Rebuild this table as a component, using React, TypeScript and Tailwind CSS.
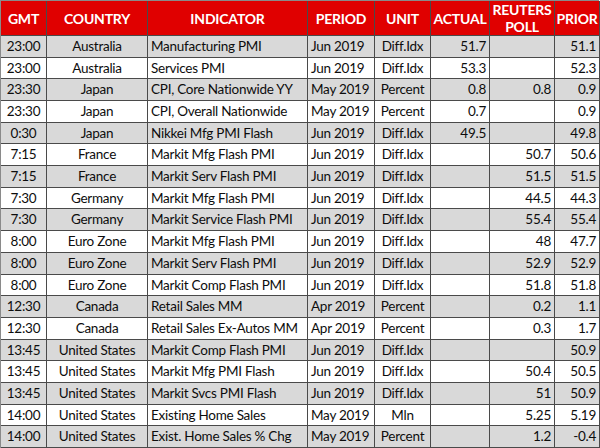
import React from 'react'

type Row = {
  gmt: string
  country: string
  indicator: string
  period: string
  unit: string
  actual: string
  poll: string
  prior: string
}

const rows: Row[] = [
  { gmt: '23:00', country: 'Australia', indicator: 'Manufacturing PMI', period: 'Jun 2019', unit: 'Diff.Idx', actual: '51.7', poll: '', prior: '51.1' },
  { gmt: '23:00', country: 'Australia', indicator: 'Services PMI', period: 'Jun 2019', unit: 'Diff.Idx', actual: '53.3', poll: '', prior: '52.3' },
  { gmt: '23:30', country: 'Japan', indicator: 'CPI, Core Nationwide YY', period: 'May 2019', unit: 'Percent', actual: '0.8', poll: '0.8', prior: '0.9' },
  { gmt: '23:30', country: 'Japan', indicator: 'CPI, Overall Nationwide', period: 'May 2019', unit: 'Percent', actual: '0.7', poll: '', prior: '0.9' },
  { gmt: '0:30', country: 'Japan', indicator: 'Nikkei Mfg PMI Flash', period: 'Jun 2019', unit: 'Diff.Idx', actual: '49.5', poll: '', prior: '49.8' },
  { gmt: '7:15', country: 'France', indicator: 'Markit Mfg Flash PMI', period: 'Jun 2019', unit: 'Diff.Idx', actual: '', poll: '50.7', prior: '50.6' },
  { gmt: '7:15', country: 'France', indicator: 'Markit Serv Flash PMI', period: 'Jun 2019', unit: 'Diff.Idx', actual: '', poll: '51.5', prior: '51.5' },
  { gmt: '7:30', country: 'Germany', indicator: 'Markit Mfg Flash PMI', period: 'Jun 2019', unit: 'Diff.Idx', actual: '', poll: '44.5', prior: '44.3' },
  { gmt: '7:30', country: 'Germany', indicator: 'Markit Service Flash PMI', period: 'Jun 2019', unit: 'Diff.Idx', actual: '', poll: '55.4', prior: '55.4' },
  { gmt: '8:00', country: 'Euro Zone', indicator: 'Markit Mfg Flash PMI', period: 'Jun 2019', unit: 'Diff.Idx', actual: '', poll: '48', prior: '47.7' },
  { gmt: '8:00', country: 'Euro Zone', indicator: 'Markit Serv Flash PMI', period: 'Jun 2019', unit: 'Diff.Idx', actual: '', poll: '52.9', prior: '52.9' },
  { gmt: '8:00', country: 'Euro Zone', indicator: 'Markit Comp Flash PMI', period: 'Jun 2019', unit: 'Diff.Idx', actual: '', poll: '51.8', prior: '51.8' },
  { gmt: '12:30', country: 'Canada', indicator: 'Retail Sales MM', period: 'Apr 2019', unit: 'Percent', actual: '', poll: '0.2', prior: '1.1' },
  { gmt: '12:30', country: 'Canada', indicator: 'Retail Sales Ex-Autos MM', period: 'Apr 2019', unit: 'Percent', actual: '', poll: '0.3', prior: '1.7' },
  { gmt: '13:45', country: 'United States', indicator: 'Markit Comp Flash PMI', period: 'Jun 2019', unit: 'Diff.Idx', actual: '', poll: '', prior: '50.9' },
  { gmt: '13:45', country: 'United States', indicator: 'Markit Mfg PMI Flash', period: 'Jun 2019', unit: 'Diff.Idx', actual: '', poll: '50.4', prior: '50.5' },
  { gmt: '13:45', country: 'United States', indicator: 'Markit Svcs PMI Flash', period: 'Jun 2019', unit: 'Diff.Idx', actual: '', poll: '51', prior: '50.9' },
  { gmt: '14:00', country: 'United States', indicator: 'Existing Home Sales', period: 'May 2019', unit: 'Mln', actual: '', poll: '5.25', prior: '5.19' },
  { gmt: '14:00', country: 'United States', indicator: 'Exist. Home Sales % Chg', period: 'May 2019', unit: 'Percent', actual: '', poll: '1.2', prior: '-0.4' },
]

// header cells
const th = 'flex items-center justify-center border-r border-b border-[#4a4a4a] bg-[#e00000] text-center font-bold text-white text-[14px] tracking-[-0.2px] leading-[17px]'
// body cells
const td = 'flex items-center border-r border-b border-[#4a4a4a] px-[3px] whitespace-nowrap overflow-hidden'

export default function App() {
  return (
    <div className="h-[448px] w-[600px] overflow-hidden bg-white font-['Lato',_'Liberation_Sans',_sans-serif] text-[13.5px] tracking-[-0.25px] text-[#0d0d0d]">
      <div className="grid w-[599px] grid-cols-[46px_101px_160px_67px_56px_59px_65px_45px] grid-rows-[35px_22px_21px_22px_22px_21px_22px_22px_21px_22px_22px_22px_21px_22px_22px_21px_22px_22px_21px_22px] border-l border-t border-[#8a8a8a]">
        <div className={th}>GMT</div>
        <div className={th}>COUNTRY</div>
        <div className={th}>INDICATOR</div>
        <div className={th}>PERIOD</div>
        <div className={th}>UNIT</div>
        <div className={th}>ACTUAL</div>
        <div className={`${th} flex-col`}>
          <span>REUTERS</span>
          <span>POLL</span>
        </div>
        <div className={th}>PRIOR</div>

        {rows.map((r, i) => {
          const bg = i % 2 === 0 ? 'bg-[#d9d9d9]' : 'bg-white'
          return (
            <React.Fragment key={i}>
              <div className={`${td} ${bg} justify-center`}>{r.gmt}</div>
              <div className={`${td} ${bg} justify-center`}>{r.country}</div>
              <div className={`${td} ${bg} justify-start`}>{r.indicator}</div>
              <div className={`${td} ${bg} justify-start`}>{r.period}</div>
              <div className={`${td} ${bg} justify-center`}>{r.unit}</div>
              <div className={`${td} ${bg} justify-end`}>{r.actual}</div>
              <div className={`${td} ${bg} justify-end`}>{r.poll}</div>
              <div className={`${td} ${bg} justify-end`}>{r.prior}</div>
            </React.Fragment>
          )
        })}
      </div>
    </div>
  )
}
